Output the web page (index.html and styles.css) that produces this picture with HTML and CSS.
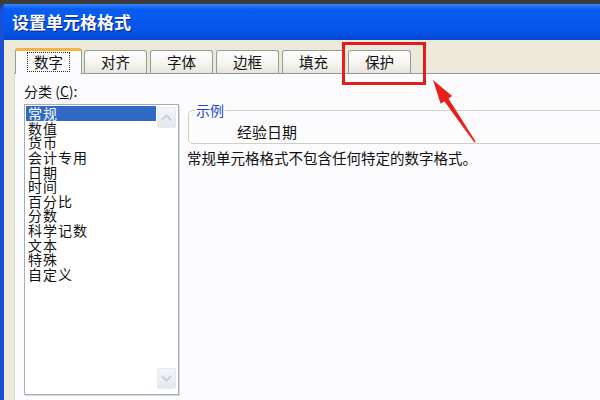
FILE: index.html
```html
<!DOCTYPE html>
<html lang="zh-CN">
<head>
  <meta charset="UTF-8" />
  <title>设置单元格格式</title>
  <link rel="stylesheet" href="styles.css">
</head>
<body>
  <div class="window">
    <div class="titlebar">设置单元格格式</div>
    <div class="frame">
      <div class="tabs">
        <div class="tab active"><span class="focus">数字</span></div>
        <div class="tab">对齐</div>
        <div class="tab">字体</div>
        <div class="tab">边框</div>
        <div class="tab">填充</div>
        <div class="tab">保护</div>
      </div>
      <div class="panel">
        <div class="left">
          <div class="label">分类 (<u>C</u>):</div>
          <div class="listbox">
            <ul class="items">
              <li class="selected">常规</li>
              <li>数值</li>
              <li>货币</li>
              <li>会计专用</li>
              <li>日期</li>
              <li>时间</li>
              <li>百分比</li>
              <li>分数</li>
              <li>科学记数</li>
              <li>文本</li>
              <li>特殊</li>
              <li>自定义</li>
            </ul>
            <div class="scrollbar">
              <div class="sbtn">
                <svg width="11" height="7" viewBox="0 0 11 7"><path d="M1 6 L5.5 1.5 L10 6" fill="none" stroke="#c9d0dc" stroke-width="2"/></svg>
              </div>
              <div class="sbtn">
                <svg width="11" height="7" viewBox="0 0 11 7"><path d="M1 1 L5.5 5.5 L10 1" fill="none" stroke="#c9d0dc" stroke-width="2"/></svg>
              </div>
            </div>
          </div>
        </div>
        <div class="right">
          <fieldset class="sample">
            <legend>示例</legend>
            <div class="sample-text">经验日期</div>
          </fieldset>
          <p class="desc">常规单元格格式不包含任何特定的数字格式。</p>
        </div>
      </div>
    </div>
  </div>

  <div class="highlight"></div>
  <svg class="arrow" width="60" height="75" viewBox="0 0 60 75">
    <path d="M8 5 L27.2 21 L23.5 23.5 L50.6 66.6 L49.4 67.4 L19.3 26.3 L15.6 28.8 Z" fill="#e8201c"/>
  </svg>
</body>
</html>
```

FILE: styles.css
```css
body {
  margin: 0;
  width: 600px;
  height: 400px;
  overflow: hidden;
  background: #3c3c3c;
  font-family: "Noto Sans CJK SC", "Noto Sans", sans-serif;
  font-size: 14px;
  color: #111;
  position: relative;
}
.window {
  margin-top: 4px;
  height: 396px;
  display: flex;
  flex-direction: column;
  border-left: 4px solid #1a4fd8;
  border-top-left-radius: 6px;
  background: #0a5cf0;
}
.titlebar {
  height: 36px;
  flex: none;
  box-sizing: border-box;
  padding: 4px 0 0 8px;
  background: linear-gradient(#3a86f8 0%, #0a5df3 14%, #0456ea 70%, #0548d6 100%);
  color: #fff;
  font-size: 17px;
  font-weight: bold;
  line-height: 28px;
  text-shadow: 1px 1px 0 #0a2a8a;
}
.frame {
  flex: 1;
  background: #ece9d8;
  padding: 10px 0 0 10px;
  display: flex;
  flex-direction: column;
}
.tabs {
  display: flex;
  align-items: flex-end;
  height: 23px;
  flex: none;
  padding-left: 3px;
}
.tab {
  width: 63px;
  height: 23px;
  margin-right: 3px;
  box-sizing: border-box;
  border: 1px solid #919b9c;
  border-bottom: none;
  border-radius: 3px 3px 0 0;
  background: linear-gradient(#fefefe, #f4f3ee 60%, #e5e4dc);
  text-align: center;
  line-height: 22px;
  font-size: 14.5px;
}
.tab.active {
  width: 67px;
  height: 26px;
  margin-left: -2px;
  margin-right: 2px;
  background: #fcfcfe;
  border-top: 3px solid #f5b241;
  line-height: 20px;
  position: relative;
  z-index: 1;
  margin-bottom: -1px;
}
.focus {
  display: inline-block;
  border: 1px dotted #333;
  padding: 0 6px;
  line-height: 18px;
  margin-top: 1px;
}
.panel {
  flex: 1;
  background: #fcfcfe;
  border-top: 1px solid #919b9c;
  border-left: 1px solid #d8d6c8;
  display: flex;
  padding: 8px 0 0 9px;
}
.left {
  width: 155px;
  flex: none;
  display: flex;
  flex-direction: column;
}
.label {
  line-height: 18px;
  margin-bottom: 4px;
}
.listbox {
  height: 287px;
  border: 1px solid #a5acb5;
  background: #fff;
  display: flex;
  padding: 1px;
  box-shadow: 1px 1px 0 #d8dde4;
}
.items {
  list-style: none;
  margin: 0;
  padding: 0;
  flex: 1;
}
.items li {
  line-height: 14.64px;
  height: 14.64px;
  padding-left: 2px;
  font-size: 14px;
  letter-spacing: 1px;
}
.items li.selected {
  background: #316ac5;
  color: #fff;
}
.scrollbar {
  width: 21px;
  display: flex;
  flex-direction: column;
  justify-content: space-between;
  padding-bottom: 3px;
}
.sbtn {
  height: 19px;
  margin: 1px;
  background: linear-gradient(#f4f6f8, #e4e8ee);
  border: 1px solid #e6e9ee;
  border-radius: 2px;
  display: flex;
  align-items: center;
  justify-content: center;
}
.right {
  flex: 1;
  padding: 20px 0 0 9px;
}
.sample {
  margin: 0;
  padding: 5px 0 2px 48px;
  border: 1px solid #d0d0bf;
  border-right: none;
  border-radius: 5px 0 0 5px;
}
.sample legend {
  color: #1e46d2;
  padding: 0 1px;
  margin-left: -42px;
  line-height: 16px;
}
.sample-text {
  line-height: 18px;
  font-size: 15px;
}
.desc {
  margin: 5px 0 0 -1px;
  line-height: 18px;
  font-size: 14.5px;
}
.highlight {
  position: absolute;
  left: 342px;
  top: 42px;
  width: 78px;
  height: 37px;
  border: 3px solid #e0201e;
}
.arrow {
  position: absolute;
  left: 425px;
  top: 75px;
}
```
